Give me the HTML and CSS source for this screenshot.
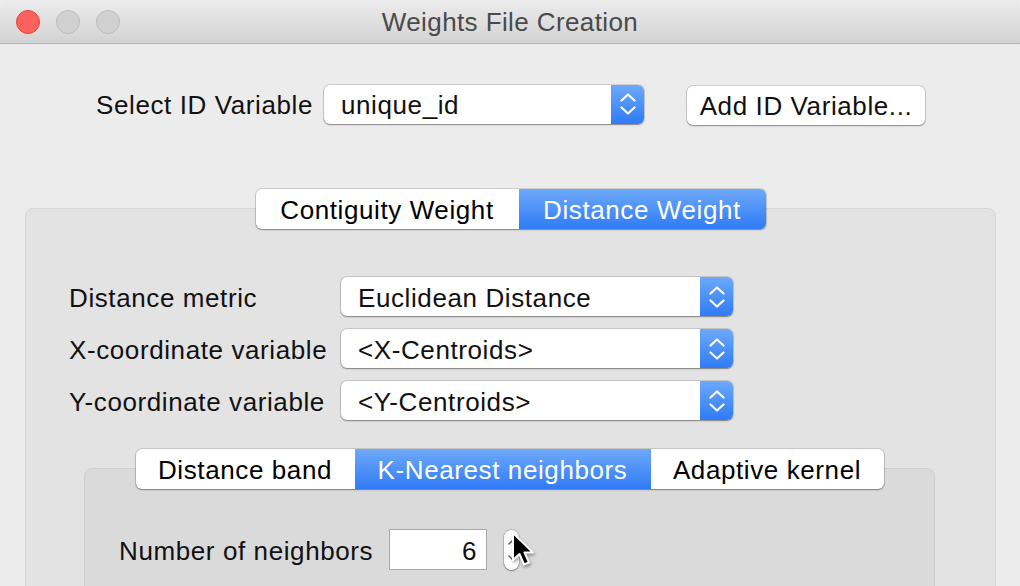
FILE: index.html
```html
<!DOCTYPE html>
<html>
<head>
<meta charset="utf-8">
<link rel="stylesheet" href="styles.css">
</head>
<body>
<div class="window">
  <div class="titlebar">
    <div class="lights">
      <span class="light close"></span>
      <span class="light"></span>
      <span class="light"></span>
    </div>
    <div class="title">Weights File Creation</div>
  </div>
  <div class="content">
    <div class="id-row">
      <span class="lbl">Select ID Variable</span>
      <div class="select id-select">
        <span class="sel-text">unique_id</span>
        <span class="sel-arrows"><svg width="16" height="22" viewBox="0 0 16 22"><path d="M1.5 7.5 L8 1.5 L14.5 7.5 M1.5 14.5 L8 20.5 L14.5 14.5" fill="none" stroke="#fff" stroke-width="2.2" stroke-linecap="round" stroke-linejoin="round"/></svg></span>
      </div>
      <div class="btn">Add ID Variable...</div>
    </div>

    <div class="tabgroup outer">
      <div class="tabs">
        <span class="tab t-contig">Contiguity Weight</span>
        <span class="tab active t-dist">Distance Weight</span>
      </div>
      <div class="box outer-box">
        <div class="form">
          <span class="flbl">Distance metric</span>
          <div class="select wide">
            <span class="sel-text">Euclidean Distance</span>
            <span class="sel-arrows"><svg width="16" height="22" viewBox="0 0 16 22"><path d="M1.5 7.5 L8 1.5 L14.5 7.5 M1.5 14.5 L8 20.5 L14.5 14.5" fill="none" stroke="#fff" stroke-width="2.2" stroke-linecap="round" stroke-linejoin="round"/></svg></span>
          </div>
          <span class="flbl">X-coordinate variable</span>
          <div class="select wide">
            <span class="sel-text">&lt;X-Centroids&gt;</span>
            <span class="sel-arrows"><svg width="16" height="22" viewBox="0 0 16 22"><path d="M1.5 7.5 L8 1.5 L14.5 7.5 M1.5 14.5 L8 20.5 L14.5 14.5" fill="none" stroke="#fff" stroke-width="2.2" stroke-linecap="round" stroke-linejoin="round"/></svg></span>
          </div>
          <span class="flbl">Y-coordinate variable</span>
          <div class="select wide">
            <span class="sel-text">&lt;Y-Centroids&gt;</span>
            <span class="sel-arrows"><svg width="16" height="22" viewBox="0 0 16 22"><path d="M1.5 7.5 L8 1.5 L14.5 7.5 M1.5 14.5 L8 20.5 L14.5 14.5" fill="none" stroke="#fff" stroke-width="2.2" stroke-linecap="round" stroke-linejoin="round"/></svg></span>
          </div>
        </div>

        <div class="tabgroup inner">
          <div class="tabs">
            <span class="tab t-band">Distance band</span>
            <span class="tab active t-knn">K-Nearest neighbors</span>
            <span class="tab t-kern">Adaptive kernel</span>
          </div>
          <div class="box inner-box">
            <div class="nn-row">
              <span class="flbl nn-lbl">Number of neighbors</span>
              <div class="numfield">6</div>
              <div class="stepper">
                <svg width="10" height="30" viewBox="0 0 10 30"><path d="M2 9 L5 6 L8 9 M2 21 L5 24 L8 21" fill="none" stroke="#555" stroke-width="1.4" stroke-linecap="round" stroke-linejoin="round"/></svg>
              </div>
            </div>
          </div>
        </div>
      </div>
    </div>
  </div>
  <svg class="cursor" width="30" height="40" viewBox="0 0 30 40">
    <path d="M2 2 L2 29 L8.5 23 L13 33.5 L18 31.5 L13.5 21.5 L22 21.5 Z" fill="#000" stroke="#fff" stroke-width="2" stroke-linejoin="round"/>
  </svg>
</div>
</body>
</html>
```

FILE: styles.css
```css
* { box-sizing: border-box; }

html, body {
  margin: 0;
  padding: 0;
  width: 1020px;
  height: 586px;
  overflow: hidden;
  background: #ececec;
}

.window {
  position: relative;
  width: 1020px;
  height: 586px;
  background: #ececec;
  border-radius: 10px 10px 0 0;
  overflow: hidden;
  font-family: "Liberation Sans", Arial, sans-serif;
  font-size: 26px;
  letter-spacing: 0.6px;
  color: #111;
}

.titlebar {
  position: relative;
  height: 44px;
  background: linear-gradient(#ececec, #d3d3d3);
  border-bottom: 1px solid #b2b2b2;
  display: flex;
  align-items: center;
  justify-content: center;
}

.lights {
  position: absolute;
  left: 16px;
  top: 10px;
  display: flex;
  gap: 16px;
}

.light {
  width: 24px;
  height: 24px;
  border-radius: 50%;
  background: #d1d1d1;
  border: 1px solid #bcbcbc;
}

.light.close {
  background: #fc615c;
  border-color: #e0463f;
}

.title {
  color: #4a4a4a;
  font-size: 26px;
  letter-spacing: 0.4px;
  margin-top: 1px;
}

.content {
  display: flex;
  flex-direction: column;
}

.id-row {
  display: flex;
  align-items: center;
  margin-top: 40px;
  height: 40px;
  padding-left: 96px;
}

.lbl {
  width: 228px;
  padding-top: 3px;
  white-space: nowrap;
}

.select {
  display: flex;
  align-items: stretch;
  height: 39px;
  background: #fff;
  border-radius: 6px;
  box-shadow: 0 0 0 1px rgba(0,0,0,0.12), 0 1px 1.5px rgba(0,0,0,0.35);
  overflow: hidden;
}

.id-select { width: 320px; }

.sel-text {
  flex: 1;
  display: flex;
  align-items: center;
  padding-left: 17px;
  padding-top: 3px;
}

.sel-arrows {
  width: 33px;
  background: linear-gradient(#6da9f9, #2f7bf6);
  display: flex;
  align-items: center;
  justify-content: center;
}

.btn {
  margin-left: 43px;
  width: 238px;
  height: 39px;
  margin-top: 2px;
  padding-top: 3px;
  background: #fff;
  border-radius: 6px;
  box-shadow: 0 0 0 1px rgba(0,0,0,0.12), 0 1px 1.5px rgba(0,0,0,0.35);
  display: flex;
  align-items: center;
  justify-content: center;
}

.tabgroup {
  display: flex;
  flex-direction: column;
}

.tabgroup.outer {
  margin: 65px 24px 0 25px;
}

.tabs {
  position: relative;
  z-index: 1;
  align-self: center;
  display: flex;
  height: 40px;
  margin-bottom: -21px;
  border-radius: 6px;
  overflow: hidden;
  background: #fff;
  box-shadow: 0 0 0 1px rgba(0,0,0,0.12), 0 1px 1.5px rgba(0,0,0,0.35);
}

.tab {
  display: flex;
  align-items: center;
  justify-content: center;
  color: #000;
  padding-top: 2px;
  white-space: nowrap;
}

.tab.active {
  background: linear-gradient(#6ea9f9, #2f7bf6);
  color: #fff;
}

.t-contig { width: 263px; }
.t-dist { width: 247px; }
.t-band { width: 219px; }
.t-knn { width: 296px; }
.t-kern { width: 233px; }

.box {
  border-radius: 8px;
  border: 1px solid #d6d6d6;
}

.outer-box {
  background: #e3e3e3;
  height: 420px;
  padding: 68px 45px 0 43px;
}

.form {
  display: grid;
  grid-template-columns: 272px 392px;
  row-gap: 13px;
  align-items: center;
}

.flbl {
  padding-top: 3px;
  white-space: nowrap;
}

.select.wide { width: 392px; }

.tabgroup.inner {
  margin: 29px 15px 0 15px;
}

.inner-box {
  background: #dadada;
  border-color: #cdcdcd;
  height: 200px;
  padding: 60px 0 0 34px;
}

.nn-row {
  display: flex;
  align-items: center;
  height: 41px;
}

.nn-lbl {
  width: 270px;
}

.numfield {
  width: 98px;
  height: 41px;
  background: #fff;
  border: 1px solid #a9a9a9;
  display: flex;
  align-items: center;
  justify-content: flex-end;
  padding-right: 9px;
  padding-top: 3px;
}

.stepper {
  margin-left: 17px;
  width: 15px;
  height: 40px;
  background: #fff;
  border-radius: 8px;
  box-shadow: 0 0 0 1px rgba(0,0,0,0.12), 0 1px 1.5px rgba(0,0,0,0.35);
  display: flex;
  align-items: center;
  justify-content: center;
}

.cursor {
  position: absolute;
  left: 511px;
  top: 531px;
  filter: drop-shadow(1px 2px 1.5px rgba(0,0,0,0.35));
}
```
